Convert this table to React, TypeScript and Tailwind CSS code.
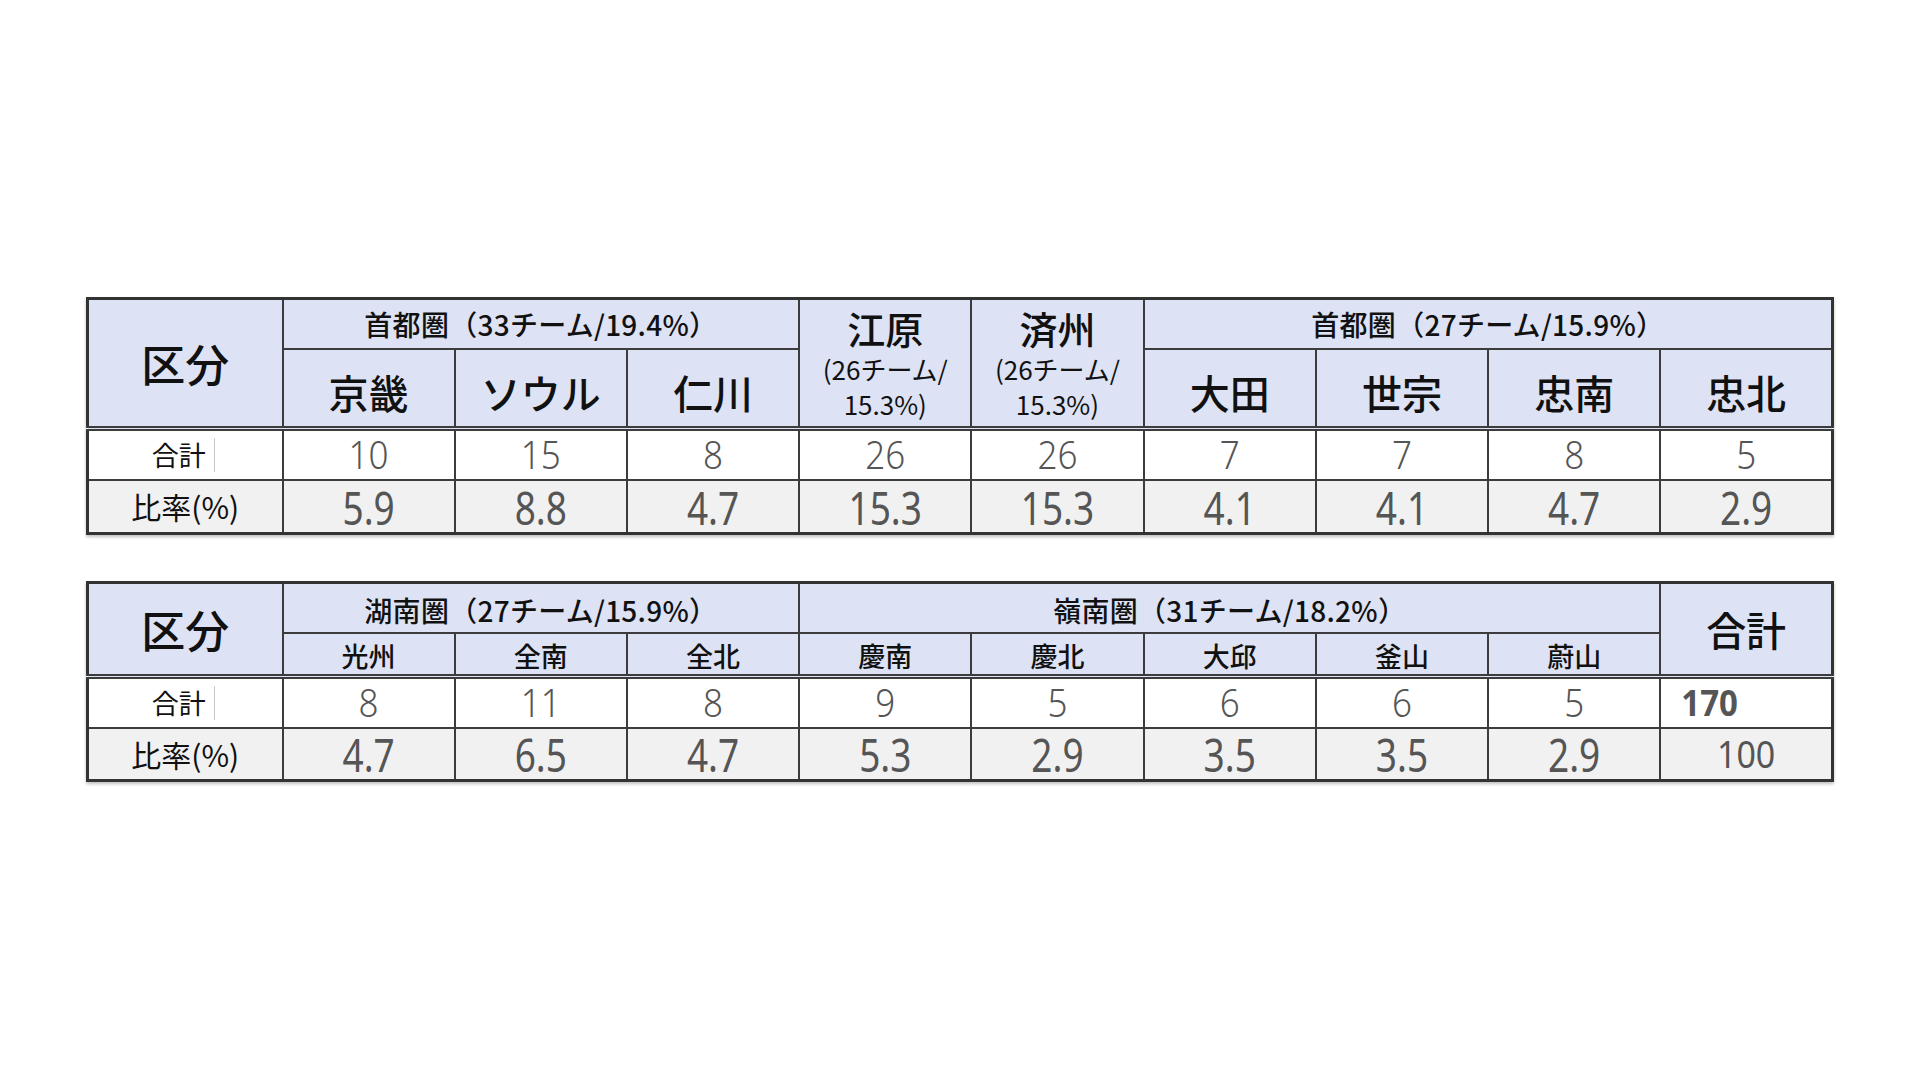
import React from "react";

const JP = "font-['Noto_Sans_CJK_JP','Noto_Sans',sans-serif]";
const NUM = "font-['Noto_Sans','Open_Sans',sans-serif]";

const HEAD = `${JP} bg-[#dde3f4] border-2 border-[#3c3c3c] text-[#111] font-medium text-center align-middle p-0 leading-none`;
const CELL = `${NUM} border-2 border-[#3c3c3c] text-center align-middle p-0 leading-none text-[#555]`;

type Row = { total: string[]; ratio: string[] };

const table1: Row = {
  total: ["10", "15", "8", "26", "26", "7", "7", "8", "5"],
  ratio: ["5.9", "8.8", "4.7", "15.3", "15.3", "4.1", "4.1", "4.7", "2.9"],
};

const table2: Row = {
  total: ["8", "11", "8", "9", "5", "6", "6", "5"],
  ratio: ["4.7", "6.5", "4.7", "5.3", "2.9", "3.5", "3.5", "2.9"],
};

function Cols() {
  return (
    <colgroup>
      <col className="w-[195px]" />
      {Array.from({ length: 9 }).map((_, i) => (
        <col key={i} />
      ))}
    </colgroup>
  );
}

function TotalLabel() {
  return (
    <td className="border-2 border-[#3c3c3c] bg-white p-0 pr-4 text-center align-middle leading-none">
      <span className={`${JP} inline-block border-r border-[#c8c8c8] pl-3 pr-2 text-[27px] leading-[34px] text-[#111]`}>
        合計
      </span>
    </td>
  );
}

function RatioLabel() {
  return (
    <td className={`${JP} border-2 border-[#3c3c3c] bg-[#f1f1f1] p-0 text-center align-middle text-[30px] leading-none text-[#111]`}>
      比率(%)
    </td>
  );
}

function Total({ v }: { v: string }) {
  return (
    <td className={`${CELL} bg-white text-[35px] font-light`}>
      <span className="inline-block scale-y-110">{v}</span>
    </td>
  );
}

function Ratio({ v }: { v: string }) {
  return (
    <td className={`${CELL} bg-[#f1f1f1] text-[37px]`}>
      <span className="inline-block scale-y-125">{v}</span>
    </td>
  );
}

function FirstTable() {
  return (
    <table className="w-[1748px] table-fixed border-collapse border-[3px] border-[#333] shadow-[0_2px_3px_rgba(0,0,0,0.25)]">
      <Cols />
      <tbody>
        <tr className="h-[50px]">
          <td rowSpan={2} className={`${HEAD} text-[44px]`}>
            区分
          </td>
          <td colSpan={3} className={`${HEAD} text-[28px] tracking-[0.01em]`}>
            首都圏（33チーム/19.4%）
          </td>
          {["江原", "済州"].map((name) => (
            <td key={name} rowSpan={2} className={HEAD}>
              <div className="flex flex-col items-center">
                <span className="text-[38px] leading-[46px]">{name}</span>
                <span className="text-[26px] leading-[35px] font-normal">(26チーム/</span>
                <span className="text-[26px] leading-[35px] font-normal">15.3%)</span>
              </div>
            </td>
          ))}
          <td colSpan={4} className={`${HEAD} text-[28px] tracking-[0.01em]`}>
            首都圏（27チーム/15.9%）
          </td>
        </tr>
        <tr className="h-[80px]">
          {["京畿", "ソウル", "仁川", "大田", "世宗", "忠南", "忠北"].map((name) => (
            <td key={name} className={`${HEAD} text-[40px] pt-2`}>
              {name}
            </td>
          ))}
        </tr>
        <tr className="h-[51px] border-t-[5px] border-double border-[#3c3c3c]">
          <TotalLabel />
          {table1.total.map((v, i) => (
            <Total key={i} v={v} />
          ))}
        </tr>
        <tr className="h-[54px]">
          <RatioLabel />
          {table1.ratio.map((v, i) => (
            <Ratio key={i} v={v} />
          ))}
        </tr>
      </tbody>
    </table>
  );
}

function SecondTable() {
  return (
    <table className="w-[1748px] table-fixed border-collapse border-[3px] border-[#333] shadow-[0_2px_3px_rgba(0,0,0,0.25)]">
      <Cols />
      <tbody>
        <tr className="h-[50px]">
          <td rowSpan={2} className={`${HEAD} text-[44px]`}>
            区分
          </td>
          <td colSpan={3} className={`${HEAD} text-[28px] tracking-[0.01em] pt-1`}>
            湖南圏（27チーム/15.9%）
          </td>
          <td colSpan={5} className={`${HEAD} text-[28px] tracking-[0.01em] pt-1`}>
            嶺南圏（31チーム/18.2%）
          </td>
          <td rowSpan={2} className={`${HEAD} text-[40px]`}>
            合計
          </td>
        </tr>
        <tr className="h-[44px]">
          {["光州", "全南", "全北", "慶南", "慶北", "大邱", "釜山", "蔚山"].map((name, i) => (
            <td key={name} className={`${HEAD} text-[27px] pt-1 ${i === 0 ? "font-bold" : ""}`}>
              {name}
            </td>
          ))}
        </tr>
        <tr className="h-[51px] border-t-[5px] border-double border-[#3c3c3c]">
          <TotalLabel />
          {table2.total.map((v, i) => (
            <Total key={i} v={v} />
          ))}
          <td className={`${CELL} bg-white pl-5 text-left text-[33px] font-bold text-[#111]`}>
            <span className="inline-block scale-y-110">170</span>
          </td>
        </tr>
        <tr className="h-[53px]">
          <RatioLabel />
          {table2.ratio.map((v, i) => (
            <Ratio key={i} v={v} />
          ))}
          <td className={`${CELL} bg-[#f1f1f1] text-[34px]`}>
            <span className="inline-block scale-y-110">100</span>
          </td>
        </tr>
      </tbody>
    </table>
  );
}

export default function App() {
  return (
    <div className="flex h-[1080px] w-[1920px] flex-col gap-[46px] bg-white pl-[86px] pt-[297px]">
      <FirstTable />
      <SecondTable />
    </div>
  );
}
